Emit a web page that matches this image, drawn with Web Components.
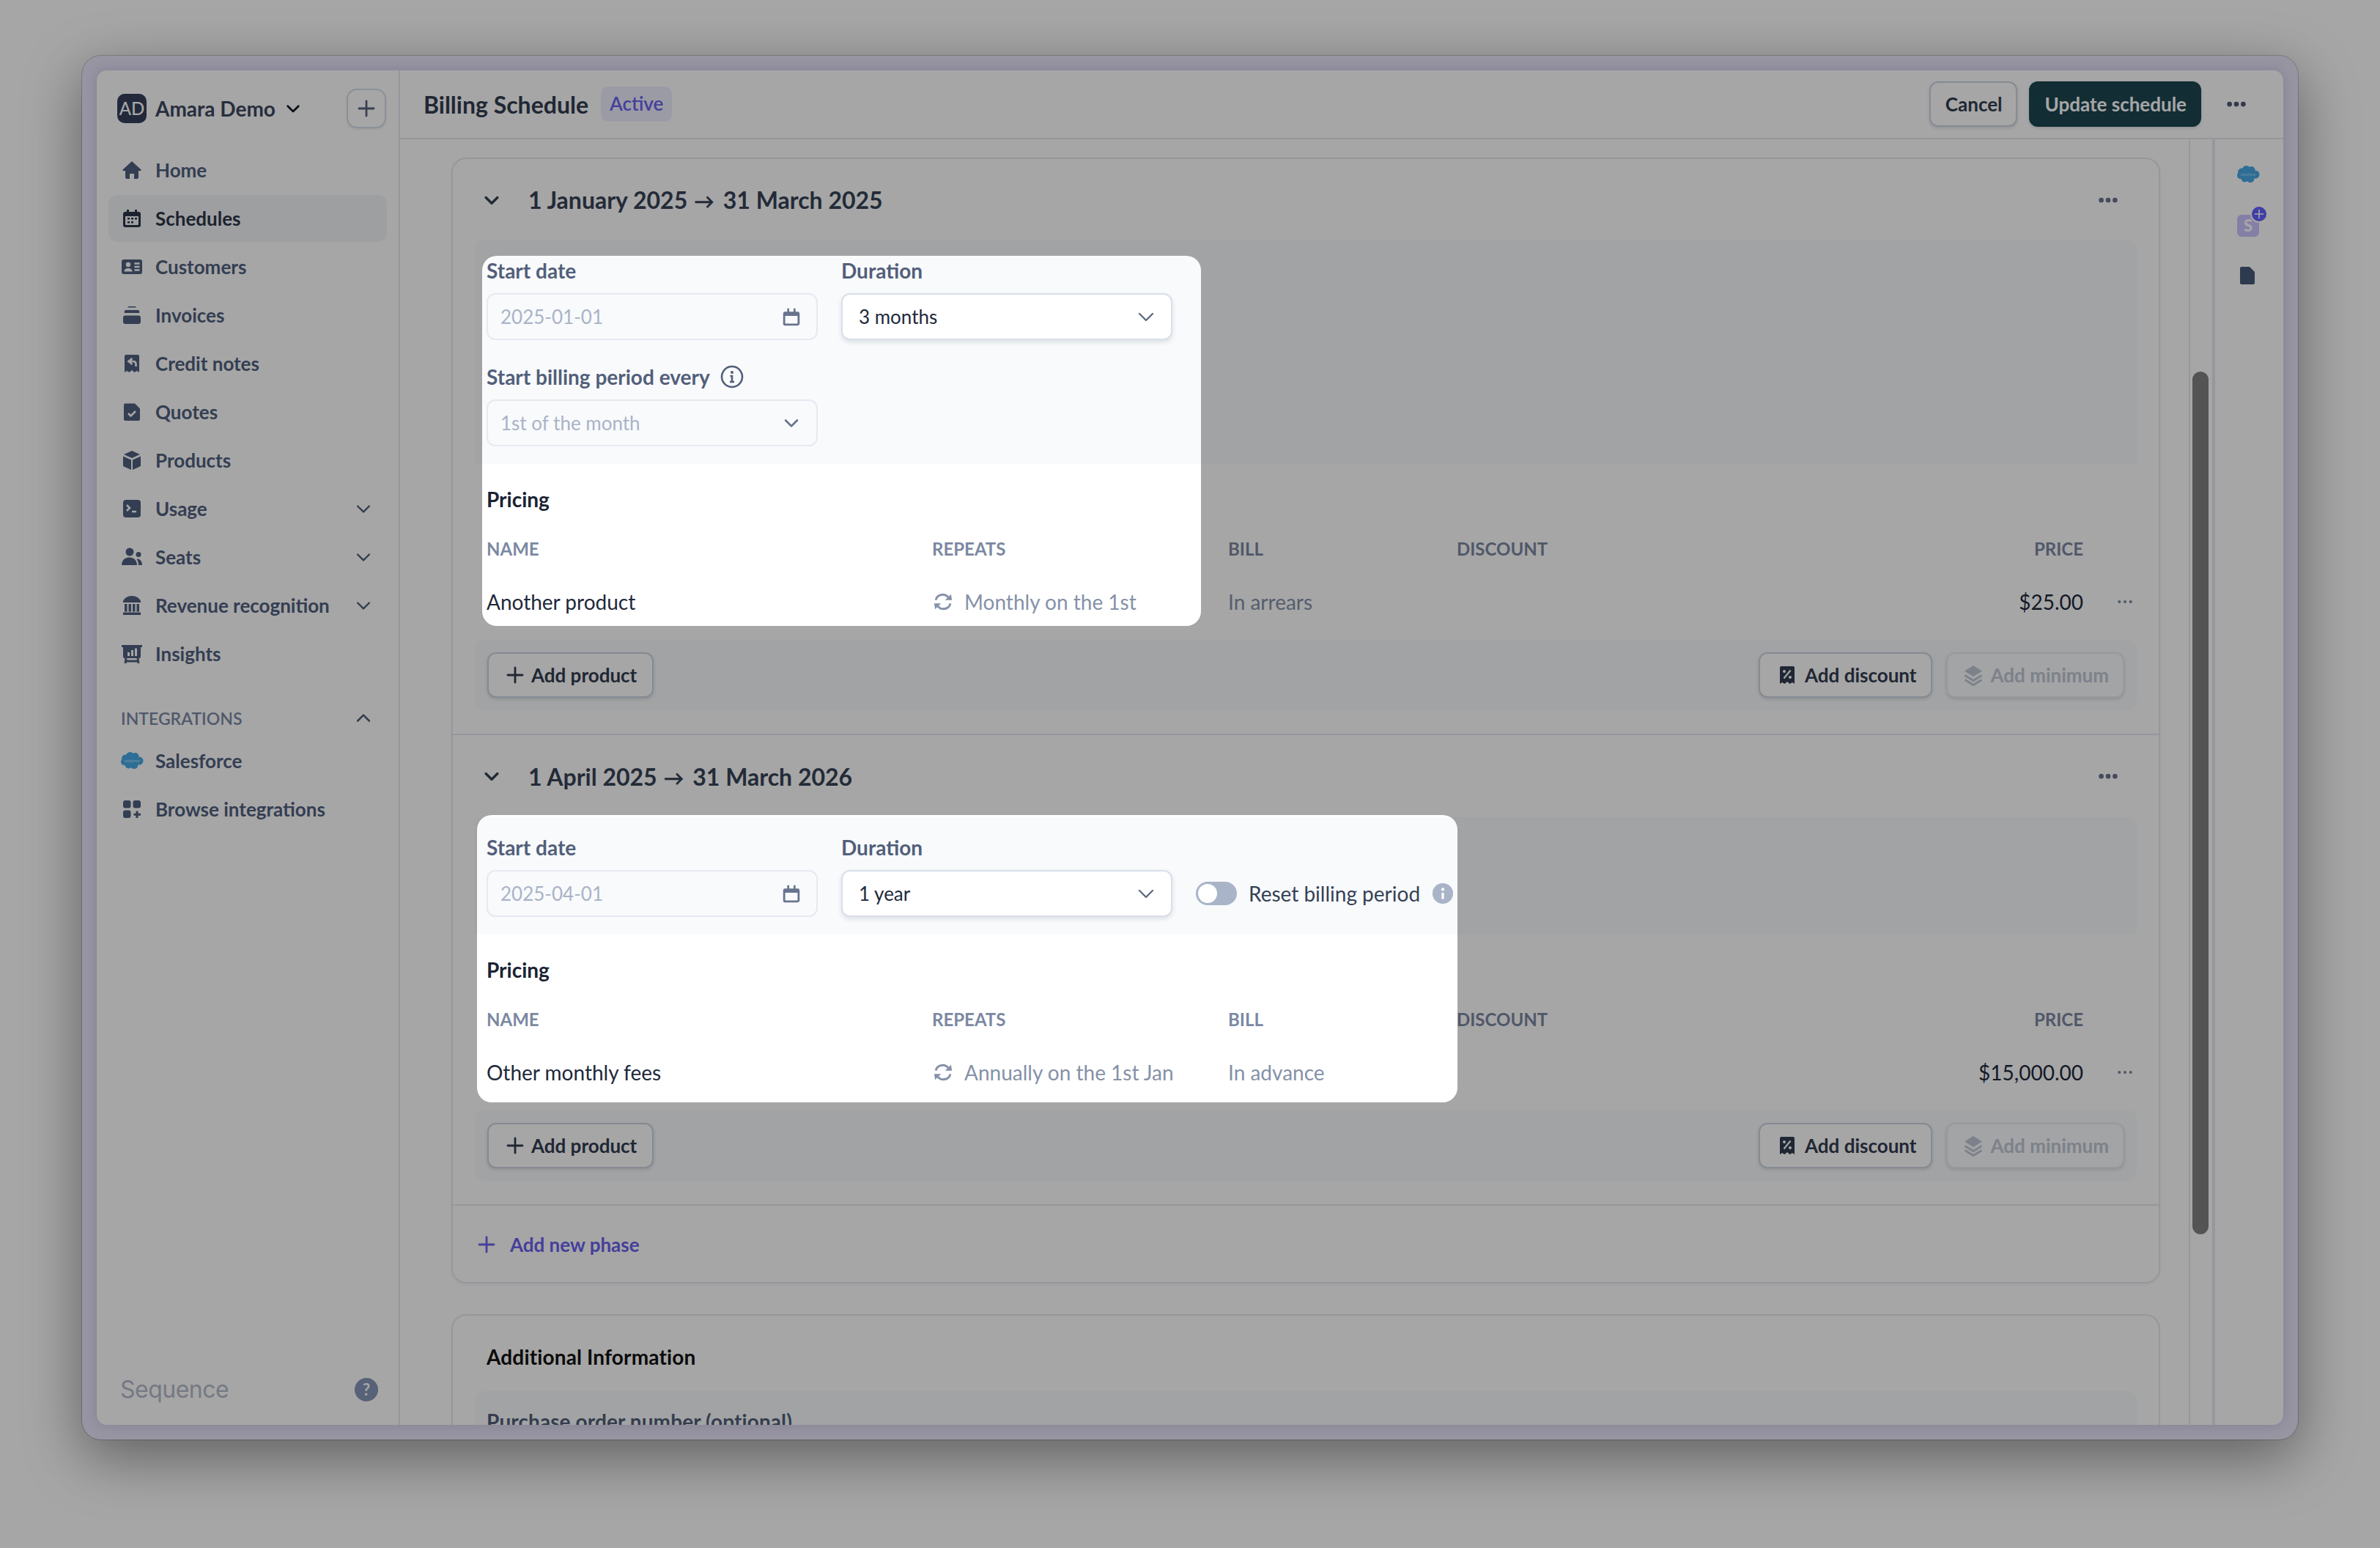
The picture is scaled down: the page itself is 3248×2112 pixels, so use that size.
<!DOCTYPE html>
<html lang="en"><head><meta charset="utf-8"><title>Billing Schedule</title>
<style>
html,body{margin:0;padding:0;background:#fff}
body{width:3248px;height:2112px;overflow:hidden;position:relative;box-sizing:border-box;padding:76px 112px 148px;font-family:Lato,"Liberation Sans",sans-serif;font-size:28px;color:#1e293b}
</style></head><body>
<app-window>
  <app-sidebar slot="side">
    <nav-item icon="home">Home</nav-item>
    <nav-item icon="calendar" active>Schedules</nav-item>
    <nav-item icon="card">Customers</nav-item>
    <nav-item icon="stack">Invoices</nav-item>
    <nav-item icon="credit">Credit notes</nav-item>
    <nav-item icon="quote">Quotes</nav-item>
    <nav-item icon="cube">Products</nav-item>
    <nav-item icon="terminal" caret>Usage</nav-item>
    <nav-item icon="users" caret>Seats</nav-item>
    <nav-item icon="bank" caret>Revenue recognition</nav-item>
    <nav-item icon="board">Insights</nav-item>
    <nav-heading>INTEGRATIONS</nav-heading>
    <nav-item icon="salesforce">Salesforce</nav-item>
    <nav-item icon="grid">Browse integrations</nav-item>
  </app-sidebar>
  <page-header slot="head"></page-header>
  <content-area slot="content">
    <schedule-card>
      <phase-block from="1 January 2025" to="31 March 2025">
        <form-field label="Start date"><date-input value="2025-01-01"></date-input></form-field>
        <form-field label="Duration"><select-input value="3 months"></select-input></form-field>
        <span></span>
        <form-field label="Start billing period every" info><select-input value="1st of the month" disabled></select-input></form-field>
        <price-table slot="table" name="Another product" repeats="Monthly on the 1st" bill="In arrears" price="$25.00"></price-table>
      </phase-block>
      <phase-block from="1 April 2025" to="31 March 2026">
        <form-field label="Start date"><date-input value="2025-04-01"></date-input></form-field>
        <form-field label="Duration"><select-input value="1 year"></select-input></form-field>
        <reset-toggle>Reset billing period</reset-toggle>
        <price-table slot="table" name="Other monthly fees" repeats="Annually on the 1st Jan" bill="In advance" price="$15,000.00"></price-table>
      </phase-block>
      <add-phase>Add new phase</add-phase>
    </schedule-card>
    <info-card></info-card>
  </content-area>
  <scroll-bar slot="scroll"></scroll-bar>
  <side-rail slot="rail"></side-rail>
</app-window>
<tour-mask></tour-mask>
<script>
const I={
home:'<path fill="currentColor" d="M16 4 28 15a1 1 0 0 1-1 2h-2v9a2 2 0 0 1-2 2h-4v-7h-6v7H9a2 2 0 0 1-2-2v-9H5a1 1 0 0 1-1-2Z"/>',
calendar:'<path fill="currentColor" fill-rule="evenodd" d="M9 4h3v3h8V4h3v3h2a3 3 0 0 1 3 3v15a3 3 0 0 1-3 3H7a3 3 0 0 1-3-3V10a3 3 0 0 1 3-3h2ZM7 13v11a1 1 0 0 0 1 1h16a1 1 0 0 0 1-1V13Z"/><path fill="currentColor" d="M10 15h3v2.500h-3zM15 15h3v2.500h-3zM20 15h3v2.500h-3zM10 20h3v2.500h-3zM15 20h3v2.500h-3z"/>',
card:'<rect x="2" y="6" width="28" height="20" rx="3" fill="currentColor"/><circle cx="11" cy="13" r="3.200" fill="#fff"/><path fill="#fff" d="M5.500 22.500c0-3 2.300-4.500 5.500-4.500s5.500 1.500 5.500 4.500Z"/><path stroke="#fff" stroke-width="2.400" d="M19.500 11.500h7M19.500 16h7M19.500 20.500h7"/>',
stack:'<path fill="currentColor" d="M11.500 4h9a1 1 0 0 1 1 1.500h-11a1 1 0 0 1 1-1.500ZM8.500 9h15a2.500 2.500 0 0 1 2.400 4H6.100A2.500 2.500 0 0 1 8.500 9ZM7 16.500h18a3 3 0 0 1 3 3V25a3 3 0 0 1-3 3H7a3 3 0 0 1-3-3v-5.500a3 3 0 0 1 3-3Z"/>',
credit:'<path fill="currentColor" d="M8 4h16a2 2 0 0 1 2 2v22l-3-2-3.500 2-3.500-3-3.500 3-3.500-2-3 2V6a2 2 0 0 1 2-2Z"/><path fill="none" stroke="#fff" stroke-width="2.600" d="M16.500 9 11.500 13l5 4M12 13h6a3.500 3.500 0 0 1 3.500 3.500V20"/>',
quote:'<path fill="currentColor" d="M7 4.500h13l7 7V26a2 2 0 0 1-2 2H7a2 2 0 0 1-2-2V6.500a2 2 0 0 1 2-2Z"/><path fill="none" stroke="#fff" stroke-width="2.600" d="m11 18 3.500 3.500 6.500-6.500"/>',
cube:'<path fill="currentColor" d="M16 3 27 8 16 13 5 8ZM4 10.500 15 15.500V29L5 24.500a2 2 0 0 1-1-2ZM28 10.500 17 15.500V29L27 24.500a2 2 0 0 0 1-2Z"/>',
terminal:'<rect x="4" y="4" width="24" height="24" rx="4" fill="currentColor"/><path fill="none" stroke="#fff" stroke-width="2.600" d="m9 11 4 4-4 4M16 20h6"/>',
users:'<circle cx="13" cy="9" r="5.500" fill="currentColor"/><path fill="currentColor" d="M2 27c0-6 4-10.500 10.500-10.500S23 21 23 27ZM24.500 18.500c3 .5 5.500 4 5.500 8.500h-5c0-3-.5-6-2.500-8Z"/><circle cx="25" cy="12.500" r="3.500" fill="currentColor"/>',
bank:'<path fill="currentColor" d="M16 3c6 0 10 3 12 7v2H4v-2c2-4 6-7 12-7ZM6 14h3.500v10.500H6ZM11.500 14H15v10.500h-3.500ZM17 14h3.500v10.500H17ZM22.500 14H26v10.500h-3.500ZM4 25.500h24V29H4Z"/>',
board:'<path fill="currentColor" d="M2 4h28v3h-2v13a2 2 0 0 1-2 2H6a2 2 0 0 1-2-2V7H2Z"/><path fill="#fff" d="M10 14h3v5h-3zM15 11h3v8h-3zM20 8.500h3V19h-3z"/><path fill="none" stroke="currentColor" stroke-width="3" d="M8 22 7 29M24 22l1 7M7.500 26h17"/>',
grid:'<rect x="4" y="4" width="10.500" height="10.500" rx="3" fill="currentColor"/><rect x="17.500" y="4" width="10.500" height="10.500" rx="3" fill="currentColor"/><rect x="4" y="17.500" width="10.500" height="10.500" rx="3" fill="currentColor"/><path stroke="currentColor" stroke-width="3" d="M23 18.500v9.500M18.500 23.200h9.500"/>',
salesforce:'<g fill="#48a9e6"><circle cx="7.500" cy="13" r="5.500"/><circle cx="13.500" cy="9.500" r="5.500"/><circle cx="20.500" cy="10" r="5"/><circle cx="26" cy="16" r="5.500"/><circle cx="19" cy="21.500" r="5.500"/><circle cx="11.500" cy="21.500" r="5"/><circle cx="5.500" cy="17.500" r="4.500"/><rect x="8" y="10" width="16" height="12"/></g><text x="16" y="17.500" font-size="5" fill="#a3d6f4" text-anchor="middle" font-family="Lato,sans-serif" font-style="italic">salesforce</text>',
stripe:'<rect x="1" y="2" width="30" height="30" rx="6" fill="#cbc3ff"/><text x="16" y="25" font-size="22" font-weight="900" fill="#fff" text-anchor="middle" font-family="Lato,sans-serif">S</text>',
doc:'<path fill="currentColor" d="M7 4h11l7 7v15a2 2 0 0 1-2 2H7a2 2 0 0 1-2-2V6a2 2 0 0 1 2-2Z"/>',
plus:'<path fill="none" stroke="currentColor" stroke-width="2.800" stroke-linecap="round" d="M16 6v20M6 16h20"/>',
discount:'<path fill="currentColor" d="M8 4h16a2 2 0 0 1 2 2v22l-3-2-3.500 2-3.500-3-3.500 3-3.500-2-3 2V6a2 2 0 0 1 2-2Z"/><path stroke="#fff" stroke-width="2.200" d="m20.500 9.500-9 11"/><circle cx="12" cy="11" r="2" fill="#fff"/><circle cx="20" cy="19" r="2" fill="#fff"/>',
layers:'<path fill="currentColor" d="M16 3 28 10.500 16 18 4 10.500Z"/><path fill="none" stroke="currentColor" stroke-width="2.800" d="m4.500 16.500 11.500 7 11.500-7M4.500 22.500l11.500 7 11.500-7"/>',
repeat:'<g fill="none" stroke="currentColor" stroke-width="3.200"><path d="M5.500 13.500C6 9 10 5.500 15.500 5.500c3.500 0 6 1.500 8 4"/><path d="M26.500 18.500C26 23 22 26.500 16.500 26.500c-3.500 0-6-1.500-8-4"/></g><path fill="currentColor" d="M19 13.500h10l-1.500-8.500ZM13 18.500H3l1.500 8.500Z"/>',
cal2:'<path fill="none" stroke="currentColor" stroke-width="3" d="M7 10.500h18a1.500 1.500 0 0 1 1.500 1.500v14a1.500 1.500 0 0 1-1.500 1.500H7A1.500 1.500 0 0 1 5.500 26V12A1.500 1.500 0 0 1 7 10.500Z"/><path fill="currentColor" d="M5 9h22v6H5ZM10 4h2.800v6H10ZM19.200 4H22v6h-2.800Z"/>',
chev:'<path fill="none" stroke="currentColor" stroke-width="var(--w,2.800)" stroke-linecap="round" stroke-linejoin="round" d="m7 12 9 9 9-9"/>',
chevup:'<path fill="none" stroke="currentColor" stroke-width="3" stroke-linecap="round" stroke-linejoin="round" d="m7 20 9-9 9 9"/>',
dots:'<circle cx="6" cy="16" r="3.600" fill="currentColor"/><circle cx="16" cy="16" r="3.600" fill="currentColor"/><circle cx="26" cy="16" r="3.600" fill="currentColor"/>',
dotsSm:'<circle cx="6.500" cy="16" r="2.500" fill="currentColor"/><circle cx="16" cy="16" r="2.500" fill="currentColor"/><circle cx="25.500" cy="16" r="2.500" fill="currentColor"/>',
info:'<circle cx="16" cy="16" r="14" fill="none" stroke="currentColor" stroke-width="2.600"/><circle cx="16" cy="10" r="2" fill="currentColor"/><path fill="none" stroke="currentColor" stroke-width="2.600" d="M13.500 15H16v8M13 23h6"/>',
infoFill:'<circle cx="16" cy="16" r="15" fill="currentColor"/><circle cx="16" cy="10" r="2.300" fill="#fff"/><path stroke="#fff" stroke-width="3.400" d="M16 15v9"/>'
};
const svg=(n,s=32,st='')=>`<svg xmlns="http://www.w3.org/2000/svg" width="${s}" height="${s}" viewBox="0 0 32 32" style="display:block;flex:none;${st}" aria-hidden="true">${I[n]}</svg>`;
function ce(name,render){customElements.define(name,class extends HTMLElement{constructor(){super();this.attachShadow({mode:'open'})}connectedCallback(){this.shadowRoot.innerHTML=render(this)}})}
const attr=(e,a)=>e.getAttribute(a)||'';

ce('app-window',()=>`<style>
:host{display:block;width:3024px;height:1888px;box-sizing:border-box;padding:20px;background:#e8e5f9;border-radius:26px;box-shadow:0 0 0 1px rgba(60,60,70,.25),0 24px 80px rgba(0,0,0,.42)}
.in{height:100%;background:#fff;border-radius:14px;overflow:hidden;display:flex;box-shadow:0 0 16px rgba(60,50,110,.18)}
.main{flex:1;min-width:0;display:flex;flex-direction:column}
.body{flex:1;min-height:0;display:flex}
</style><div class="in"><slot name="side"></slot><div class="main"><slot name="head"></slot><div class="body"><slot name="content"></slot><slot name="scroll"></slot><slot name="rail"></slot></div></div></div>`);

ce('app-sidebar',()=>`<style>
:host{display:flex;flex-direction:column;flex:none;width:414px;height:100%;box-sizing:border-box;border-right:2px solid #e5e9f0}
.acct{height:104px;flex:none;display:flex;align-items:center;padding:0 17px 0 28px}
.av{width:40px;height:40px;border-radius:10px;background:#363f5b;color:#fff;font:500 24px/40px Lato,sans-serif;text-align:center;flex:none}
.nm{margin-left:12px;font-size:28px;font-weight:700;color:#3c4760;white-space:nowrap}
.cv{margin-left:11px;color:#111827;--w:3.400}
.add{margin-left:auto;width:54px;height:54px;box-sizing:border-box;border:2px solid #d5dde8;border-radius:14px;display:flex;align-items:center;justify-content:center;color:#56637c;box-shadow:0 2px 3px rgba(30,41,59,.08)}
.nav{display:flex;flex-direction:column;gap:2px;padding:0 16px}
.foot{margin-top:auto;height:48px;margin-bottom:24px;display:flex;align-items:center;justify-content:space-between;padding:0 28px 0 32px;flex:none}
.seq{font:400 32px/48px Inter,sans-serif;letter-spacing:-.5px;color:#b4bacb}
.q{width:32px;height:32px;border-radius:50%;background:#8696b8;color:#fff;font:700 22px/32px Lato,sans-serif;text-align:center}
</style>
<div class="acct"><span class="av">AD</span><span class="nm">Amara Demo</span><span class="cv">${svg('chev',26)}</span><span class="add">${svg('plus',32)}</span></div>
<div class="nav"><slot></slot></div>
<div class="foot"><span class="seq">Sequence</span><span class="q">?</span></div>`);

ce('nav-item',e=>{const a=e.hasAttribute('active');return `<style>
:host{display:flex;align-items:center;height:64px;border-radius:12px;padding:0 22px 0 16px;gap:16px;flex:none;font-size:26px;font-weight:700;color:${a?'#2c3648':'#50607f'};background:${a?'#f3f5f7':'transparent'};white-space:nowrap}
.t{flex:1}
.c{color:#50607f;margin-right:-4px}
</style>${svg(attr(e,'icon'))}<span class="t"><slot></slot></span>${e.hasAttribute('caret')?`<span class="c">${svg('chev',28)}</span>`:''}`});

ce('nav-heading',()=>`<style>
:host{display:flex;align-items:center;justify-content:space-between;height:48px;margin-top:30px;padding:0 22px 0 17px;font-size:23px;font-weight:600;color:#7b89a6}
.c{color:#50607f;margin-right:-4px}
</style><slot></slot><span class="c">${svg('chevup',28)}</span>`);

ce('page-header',()=>`<style>
:host{display:flex;align-items:center;height:94px;flex:none;box-sizing:border-box;border-bottom:2px solid #e5e9f0;padding:0 52px 0 32px}
h1{margin:0;font-size:32px;font-weight:700;color:#323c50;white-space:nowrap}
.b{margin-left:17px;height:48px;padding:0 12px;box-sizing:border-box;border-radius:10px;background:#eeeeff;color:#6a62ee;font-size:26px;font-weight:600;line-height:46px}
.r{margin-left:auto;display:flex;align-items:center;gap:16px}
.d{margin-left:17px;color:#4d5a74;margin-right:-3px}
</style><h1>Billing Schedule</h1><span class="b">Active</span>
<div class="r"><ui-button>Cancel</ui-button><ui-button variant="primary">Update schedule</ui-button><span class="d">${svg('dots',30)}</span></div>`);

ce('ui-button',e=>{const v=attr(e,'variant');const ic=attr(e,'icon');
const c=v==='primary'?'background:#1c4650;color:#fff;border-color:#1c4650;':v==='muted'?'background:#fbfcfd;color:#c0c7d6;border-color:#e8ecf2;':'background:#fff;color:#323c50;border-color:#ccd5e2;';
const pad={plus:'0 21px 0 20px;gap:6px',discount:'0 19px 0 21px;gap:8px',layers:'0 19px 0 19px;gap:8px','':'0 18px 0 20px;gap:8px'}[ic];
return `<style>
:host{display:inline-flex;align-items:center;height:62px;box-sizing:border-box;border:2px solid;${c}border-radius:12px;padding:${pad};font-size:26px;font-weight:700;white-space:nowrap;box-shadow:0 2px 4px rgba(30,41,59,.14)}
</style>${ic?svg(ic,32):''}<slot></slot>`});

ce('content-area',()=>`<style>
:host{display:block;flex:1;min-width:0;height:100%;box-sizing:border-box;overflow:hidden;padding:25px 39px 0 70px}
</style><slot></slot>`);

ce('schedule-card',()=>`<style>
:host{display:block;box-sizing:border-box;border:2px solid #e5e9f0;border-radius:20px;box-shadow:0 2px 4px rgba(30,41,59,.05);overflow:hidden}
</style><slot></slot>`);

ce('phase-block',e=>`<style>
:host{display:block;padding:0 30px 32px;border-bottom:2px solid #e5e9f0}
.hd{height:111px;display:flex;align-items:center;padding-left:9px;color:#364154}
:host(:not(:first-child)) .hd{height:112px}
h2{margin:0 0 0 36px;font-size:32px;font-weight:700;color:#374256;white-space:nowrap}
h2 span{font-size:28px;margin:0 4px 0 1px}
.cv{--w:4}
.d{margin-left:auto;margin-right:24px;color:#68738e}
.sec{background:#f8fafc;border-radius:12px 12px 0 0;padding:22px 16px 24px;display:grid;grid-template-columns:452px 452px auto;column-gap:32px;row-gap:31px;justify-content:start}
.bar{margin-top:32px;height:96px;box-sizing:border-box;background:#f8fafc;border-radius:12px;display:flex;align-items:center;padding:0 17px;gap:19px}
.sp{flex:1}
</style><div class="hd"><span class="cv">${svg('chev',28)}</span><h2>${attr(e,'from')} <span>→</span> ${attr(e,'to')}</h2><span class="d">${svg('dots',30)}</span></div>
<div class="sec"><slot></slot></div><slot name="table"></slot>
<div class="bar"><ui-button icon="plus">Add product</ui-button><span class="sp"></span><ui-button icon="discount">Add discount</ui-button><ui-button icon="layers" variant="muted">Add minimum</ui-button></div>`);

ce('form-field',e=>`<style>
:host{display:block;min-width:0}
.l{height:40px;box-sizing:border-box;padding-bottom:3px;margin-bottom:10px;display:flex;align-items:center;gap:14px;font-size:28px;font-weight:700;color:#525f7a;white-space:nowrap}
</style><div class="l">${attr(e,'label')}${e.hasAttribute('info')?svg('info',32):''}</div><slot></slot>`);

ce('date-input',e=>`<style>
:host{display:flex;align-items:center;justify-content:space-between;height:64px;box-sizing:border-box;border:2px solid #e6eaf1;border-radius:12px;background:#f8fafc;padding:0 19px 0 17px;font-size:26px;color:#aab3c6}
.i{color:#68738e}
</style><span>${attr(e,'value')}</span><span class="i">${svg('cal2',30)}</span>`);

ce('select-input',e=>{const d=e.hasAttribute('disabled');return `<style>
:host{display:flex;align-items:center;justify-content:space-between;height:64px;box-sizing:border-box;border:2px solid ${d?'#e6eaf1':'#d9dfea'};border-radius:12px;background:${d?'#f8fafc':'#fff'};padding:0 ${d?'20px':'18px'} 0 ${d?'17px':'22px'};font-size:26px;color:${d?'#aab3c6':'#1e293b'};${d?'':'box-shadow:0 3px 6px rgba(30,41,59,.12)'}}
.i{color:${d?'#68738e':'#5e6a84'};--w:${d?3.2:2.4}}
</style><span>${attr(e,'value')}</span><span class="i">${svg('chev',d?28:32)}</span>`});

ce('reset-toggle',()=>`<style>
:host{display:flex;align-items:center;height:64px;align-self:end;white-space:nowrap;font-size:28px;color:#364154;font-weight:400;gap:16px}
.tg{width:56px;height:32px;border-radius:16px;background:#a9b4c8;box-sizing:border-box;padding:3px;flex:none}
.k{display:block;width:26px;height:26px;border-radius:50%;background:#fff}
.i{color:#a9b4c8}
</style><span class="tg"><span class="k"></span></span><span><slot></slot></span><span class="i">${svg('infoFill',30)}</span>`);

ce('price-table',e=>`<style>
:host{display:grid;grid-template-columns:608px 404px 312px 1fr 200px 73px;padding:28px 0 0 16px;font-size:28px;color:#1e293b}
.p{grid-column:1/-1;height:40px;line-height:40px;font-weight:700;color:#1a2333;margin-bottom:28px;font-size:28px}
.h{height:40px;line-height:40px;font-size:24px;font-weight:700;color:#7b88a2;margin-bottom:32px}
.c{height:40px;line-height:40px;white-space:nowrap}
.m{color:#8591a8}
.rp{display:flex;align-items:center;gap:14px;color:#8591a8}
.r{text-align:right}
.d{display:flex;align-items:center;height:40px;justify-content:flex-end;color:#7b88a2;margin-right:1px}
</style><div class="p">Pricing</div>
<div class="h">NAME</div><div class="h">REPEATS</div><div class="h">BILL</div><div class="h">DISCOUNT</div><div class="h r">PRICE</div><div class="h"></div>
<div class="c">${attr(e,'name')}</div><div class="c rp">${svg('repeat',30)}<span>${attr(e,'repeats')}</span></div><div class="c m">${attr(e,'bill')}</div><div class="c"></div><div class="c r">${attr(e,'price')}</div><div class="d">${svg('dotsSm',26,'margin-right:2px')}</div>`);

ce('add-phase',()=>`<style>
:host{display:flex;align-items:center;height:104px;box-sizing:border-box;padding:2px 0 0 30px;gap:16px;font-size:26px;font-weight:700;color:#6a62ee}
</style>${svg('plus',32)}<slot></slot>`);

ce('info-card',()=>`<style>
:host{display:block;margin-top:42px;box-sizing:border-box;border:2px solid #e5e9f0;border-radius:20px 20px 0 0;padding:36px 30px 0;height:400px}
h3{margin:0 0 27px 16px;font-size:28px;line-height:40px;font-weight:700;color:#111;letter-spacing:.15px}
.sec{background:#f8fafc;border-radius:12px 12px 0 0;padding:21px 16px;height:300px;font-size:28px;line-height:40px;font-weight:700;color:#525f7a;letter-spacing:.1px}
</style><h3>Additional Information</h3><div class="sec">Purchase order number (optional)</div>`);

ce('scroll-bar',()=>`<style>
:host{display:block;flex:none;width:32px;height:100%;box-sizing:border-box;border-left:2px solid #e5e9f0;padding:317px 0 0 3px}
i{display:block;width:22px;height:1177px;border-radius:11px;background:#828282}
</style><i></i>`);

ce('side-rail',()=>`<style>
:host{display:flex;flex-direction:column;align-items:center;flex:none;width:97px;height:100%;box-sizing:border-box;border-left:4px solid #e5e9f0;padding:32px 4px 0 0;gap:37px}
.s{position:relative;height:32px;color:#485a78}
.b{position:absolute;right:-11px;top:-11px;width:20px;height:20px;border-radius:50%;background:#6160ff;color:#fff;border:2px solid #fff;display:flex;align-items:center;justify-content:center}
</style><span class="s">${svg('salesforce',32)}</span><span class="s">${svg('stripe',32)}<span class="b">${svg('plus',18)}</span></span><span class="s">${svg('doc',32)}</span>`);

function rr(x,y,x2,y2,r){return `M${x+r} ${y}H${x2-r}A${r} ${r} 0 0 1 ${x2} ${y+r}V${y2-r}A${r} ${r} 0 0 1 ${x2-r} ${y2}H${x+r}A${r} ${r} 0 0 1 ${x} ${y2-r}V${y+r}A${r} ${r} 0 0 1 ${x+r} ${y}Z`}
ce('tour-mask',()=>`<style>
:host{position:absolute;left:0;top:0;width:3248px;height:2112px;pointer-events:none;z-index:10}
svg{display:block}
</style><svg xmlns="http://www.w3.org/2000/svg" width="3248" height="2112" viewBox="0 0 3248 2112" aria-hidden="true"><path fill="#000" fill-opacity=".35" fill-rule="evenodd" d="M0 0H3248V2112H0Z${rr(658,349,1639,854,20)}${rr(651,1112,1989,1504,20)}"/></svg>`);
</script>
</body></html>
